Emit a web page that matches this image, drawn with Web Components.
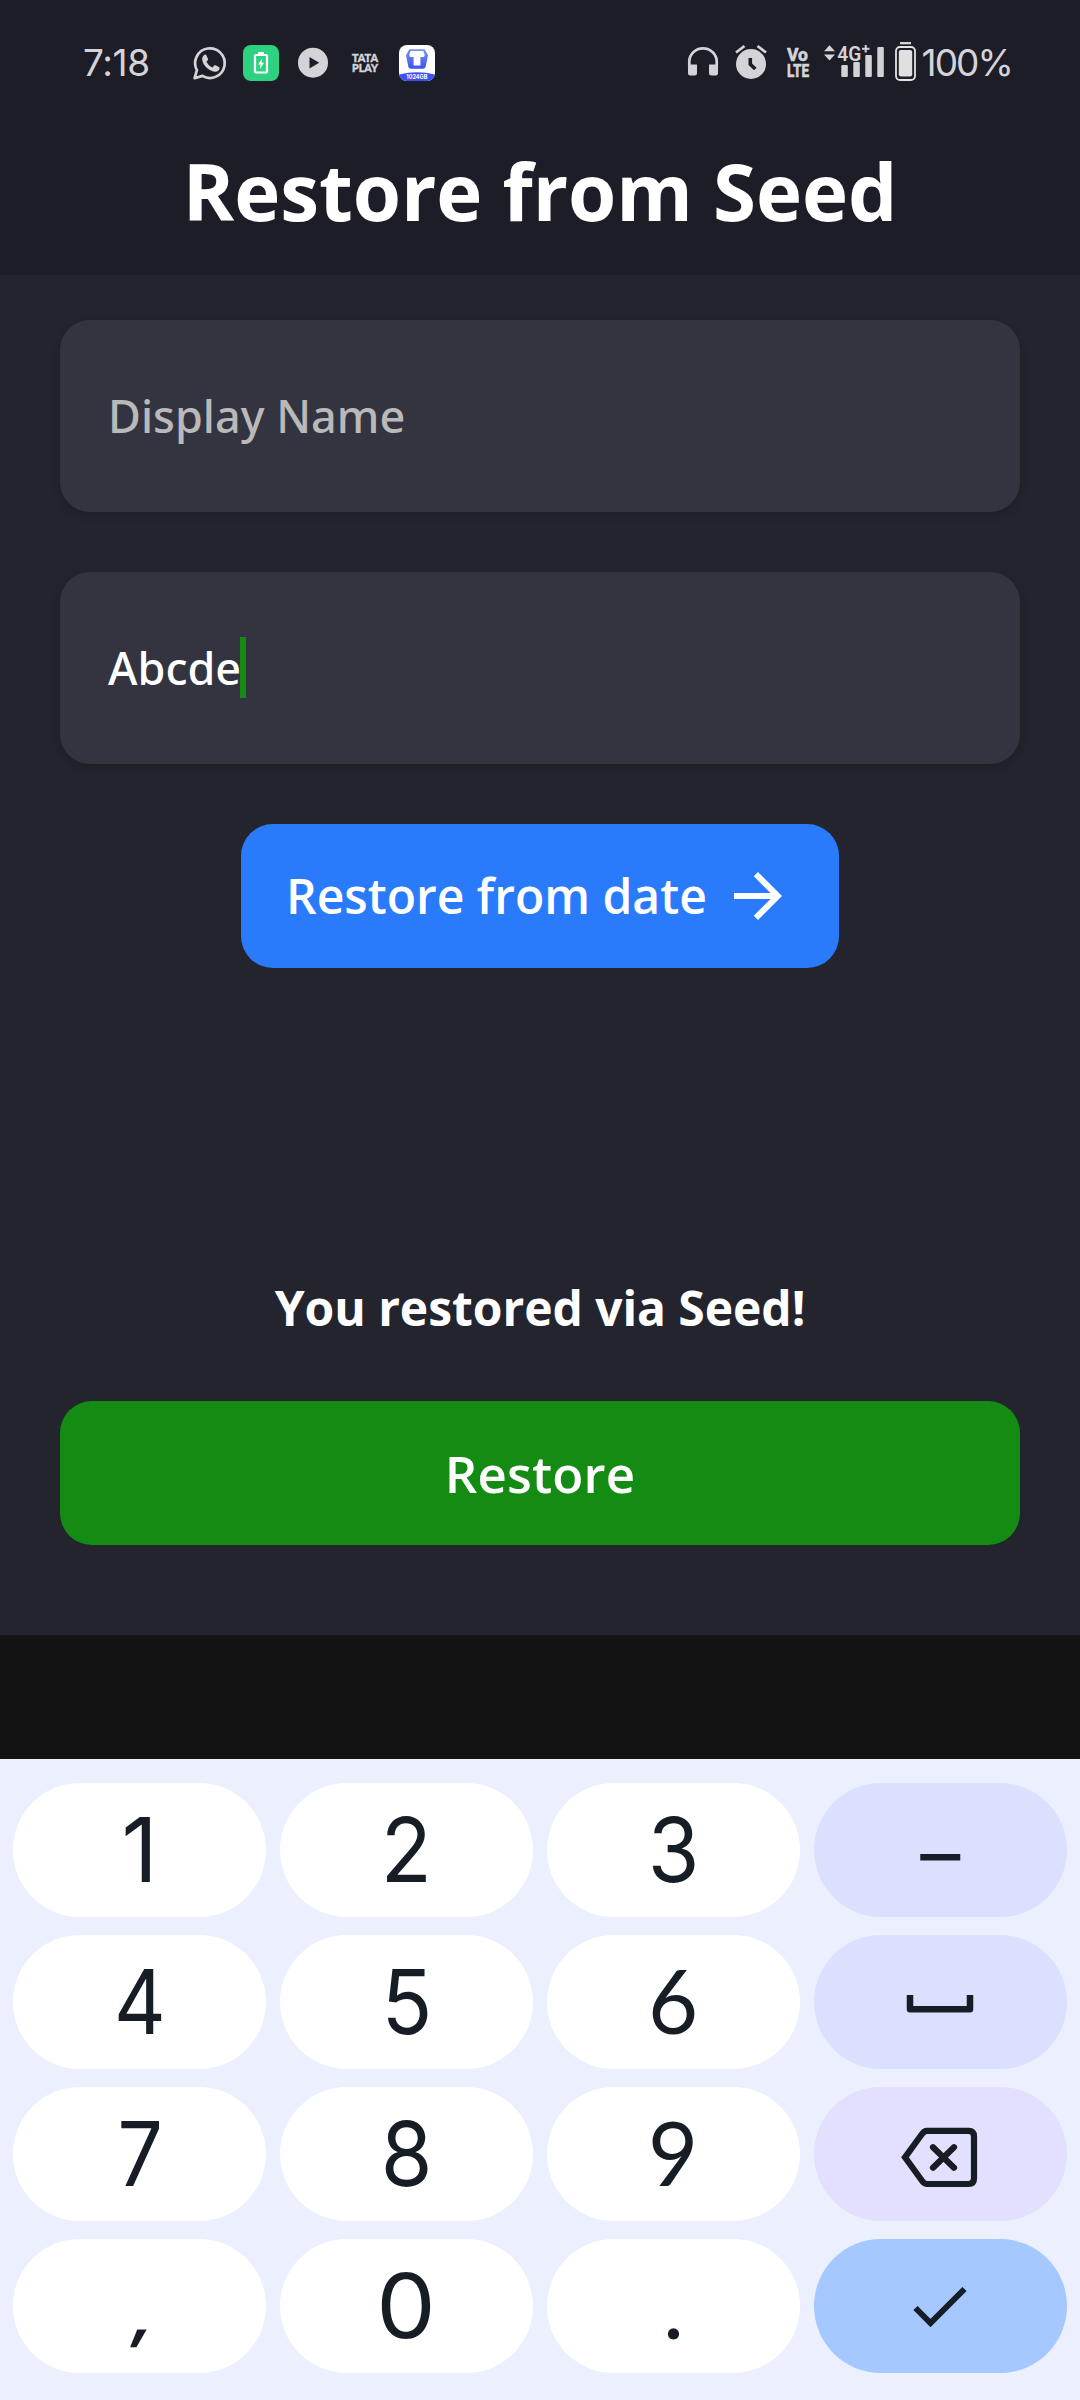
<!DOCTYPE html>
<html lang="en">
<head>
<meta charset="utf-8">
<title>Restore from Seed</title>
<style>
  html, body { margin: 0; padding: 0; }
  body { width: 1080px; height: 2400px; overflow: hidden; background: #131313; }
</style>
</head>
<body>
<restore-screen></restore-screen>

<script>
const define = (name, html) => {
  const tpl = document.createElement('template');
  tpl.innerHTML = html;
  customElements.define(name, class extends HTMLElement {
    constructor() {
      super();
      this.attachShadow({ mode: 'open' }).append(tpl.content.cloneNode(true));
    }
  });
};

define('status-bar', `
<style>
  :host { display: flex; align-items: flex-start; justify-content: space-between; height: 106px;
    padding: 38px 66px 0 83px; box-sizing: border-box; color: #d4d4d8; font: 400 37px/50px Inter, sans-serif; }
  .side { display: flex; align-items: center; height: 50px; }
  svg { display: block; flex: none; overflow: visible; }
  .time { width: 67px; letter-spacing: -.4px; white-space: nowrap; }
  .pct { letter-spacing: -1.900px; margin-left: 5.500px; white-space: nowrap; width: 92.500px; }
</style>
<div class="side">
  <span class="time">7:18</span>
  <svg style="margin-left:42px" width="35" height="50" viewBox="0 0 35 50" fill="none" stroke="#d4d4d8" stroke-width="2.7">
    <path d="M2.6 40.2 4.9 32.2A14.8 14.8 0 1 1 10.4 37.9Z" stroke-linejoin="round"/>
    <path fill="#d4d4d8" stroke="none" d="M11.8 17.2c.8-.8 2.1-.9 2.6.1l1.5 3.4c.3.7.1 1.2-.3 1.7l-1.1 1.3c1.3 2.7 3.3 4.5 6.1 5.7l1.5-1.8c.4-.5.9-.6 1.4-.3l3.4 1.7c.7.4.8.8.6 1.6-.5 2.3-2.5 3.4-4.6 3.2-6.4-.8-11.9-6.3-12.7-12-.2-1.8.5-3.5 1.600-4.600z"/>
  </svg>
  <svg style="margin-left:16px" width="36" height="50" viewBox="0 0 36 50">
    <rect x="0" y="7" width="36" height="36" rx="8" fill="#2dd280"/>
    <rect x="12" y="17" width="12" height="17.500" rx="1" fill="none" stroke="#fff" stroke-width="2.200"/>
    <rect x="15" y="14" width="6" height="3" fill="#fff"/>
    <path d="M19.400 20.500 15 26.500h2.600l-.9 4.800 4.500-6.500h-2.700z" fill="#fff"/>
  </svg>
  <svg style="margin-left:19px" width="30" height="50" viewBox="0 0 30 50">
    <circle cx="15" cy="24.700" r="15" fill="#d4d4d8"/><path d="M11.500 19v11.600l9.700-5.800z" fill="#1d1d27"/>
  </svg>
  <svg style="margin-left:24px" width="27" height="50" viewBox="0 0 27 50" fill="#d4d4d8" stroke="#d4d4d8" stroke-width=".4" font-family="Lato" font-weight="900" font-size="10.500">
    <text x="0" y="23.700" textLength="26" lengthAdjust="spacingAndGlyphs">TATA</text>
    <text x="0" y="33.500" textLength="26" lengthAdjust="spacingAndGlyphs">PLAY</text>
  </svg>
  <svg style="margin-left:20px" width="36" height="50" viewBox="0 0 36 50">
    <defs><clipPath id="tile"><rect y="7" width="36" height="36" rx="8"/></clipPath>
    <linearGradient id="tg" x2="0" y2="1"><stop stop-color="#7893f5"/><stop offset="1" stop-color="#3d52ee"/></linearGradient></defs>
    <g clip-path="url(#tile)"><rect y="7" width="36" height="36" fill="#fff"/>
      <path d="M0 36.500Q18 32 36 36.500V43H0z" fill="#3f51f5"/></g>
    <path d="M10.300 11.300h15.400l3.300 6-2.300 11.200q-.5 2.200-2.700 2.200H12q-2.200 0-2.700-2.200L7 17.300z" fill="url(#tg)"/>
    <path d="M11.700 13h12.600l1.500 4-.8 2h-3.600v8.400h-6.800V19H11l-.8-2z" fill="#fff"/>
    <text x="7.300" y="41.200" font-family="Inter" font-weight="700" font-size="6" fill="#fff" textLength="21" lengthAdjust="spacingAndGlyphs">1024GB</text>
  </svg>
</div>
<div class="side">
  <svg width="30" height="50" viewBox="0 0 30 50">
    <path d="M1.300 30V23.500a13.700 13.200 0 0 1 27.400 0V30" fill="none" stroke="#d4d4d8" stroke-width="2.700"/>
    <path d="M0 26.500h9V35q0 2.500-2.500 2.500h-4Q0 37.500 0 35zM30 26.500h-9V35q0 2.500 2.500 2.500h4Q30 37.500 30 35z" fill="#d4d4d8"/>
  </svg>
  <svg style="margin-left:17px" width="32" height="50" viewBox="0 0 32 50">
    <circle cx="16" cy="26" r="15" fill="#d4d4d8"/>
    <path d="M1 14.500 9.500 8M31 14.500 22.500 8" stroke="#d4d4d8" stroke-width="2.800"/>
    <path d="M15.300 20v6.200l5 4.800" fill="none" stroke="#1d1d27" stroke-width="3.600"/>
  </svg>
  <svg style="margin-left:20px" width="22" height="50" viewBox="0 0 22 50" fill="#d4d4d8" stroke="#d4d4d8" stroke-width=".5" font-family="Roboto" font-weight="800">
    <text x="0" y="22.500" font-size="18.500" textLength="21" lengthAdjust="spacingAndGlyphs">Vo</text>
    <text x="0" y="38.600" font-size="18.500" textLength="22" lengthAdjust="spacingAndGlyphs">LTE</text>
  </svg>
  <svg style="margin-left:15px" width="60" height="50" viewBox="0 0 60 50" fill="#d4d4d8">
    <path d="M0 13.200 5.500 7.200l5.500 6zM0 16.500h11l-5.500 6z"/>
    <text x="13.300" y="22.500" font-family="Roboto" font-weight="600" font-size="20.500" textLength="24" lengthAdjust="spacingAndGlyphs">4G</text>
    <path d="M38 10.800h7.500M41.700 7v7.500" stroke="#d4d4d8" stroke-width="2"/>
    <rect x="17.300" y="27" width="6.500" height="12" rx="1"/>
    <rect x="29.300" y="24" width="6.500" height="15" rx="1"/>
    <rect x="41.300" y="17" width="6.500" height="22" rx="1"/>
    <rect x="53.300" y="9" width="6.500" height="30" rx="1"/>
  </svg>
  <svg style="margin-left:11px" width="21" height="50" viewBox="0 0 21 50">
    <rect x="5" y="4" width="11" height="2.300" fill="#d4d4d8"/>
    <rect x="1" y="9" width="19" height="33" rx="4" fill="none" stroke="#e4e4e6" stroke-width="1.800"/>
    <rect x="3.800" y="12" width="13.400" height="26.500" rx="2" fill="#e0e0e2"/>
  </svg>
  <span class="pct">100%</span>
</div>`);

define('app-header', `
<style>
  :host { display: flex; align-items: center; justify-content: center; height: 169px; }
  h1 { margin: 0; color: #fff; font: 700 78px/106px "Open Sans", sans-serif; white-space: nowrap; letter-spacing: -.06px; }
</style><h1><slot></slot></h1>`);

define('text-field', `
<style>
  :host { display: flex; align-items: center; height: 192px; padding: 0 48px 2px; box-sizing: border-box;
    border-radius: 30px; background: #343440; color: #fff; box-shadow: 0 3px 8px rgba(0,0,0,.2);
    font: 500 45px/61px "Noto Sans", sans-serif; }
  :host([placeholder]) { color: #b9b9b9; }
  i { display: none; width: 6px; height: 61px; margin-left: -1px; background: #148c14; }
  :host([focused]) i { display: block; }
</style><slot></slot><i></i>`);

define('action-button', `
<style>
  :host { display: flex; align-items: center; justify-content: center; height: 144px; box-sizing: border-box;
    border-radius: 32px; background: #148c14; color: #fff; white-space: nowrap;
    font: 600 51px/70px "Open Sans", sans-serif; letter-spacing: .15px; }
  :host([date]) { width: 598px; align-self: center; background: #297bfc; font-size: 48px; letter-spacing: 0;
    justify-content: flex-start; padding-left: 45px; }
  svg { display: none; margin-left: 15px; }
  :host([date]) svg { display: block; }
</style><slot></slot>
<svg width="72" height="72" viewBox="0 0 24 24" fill="#fff"><path d="M12 4 10.590 5.410 16.170 11H4v2h12.170l-5.580 5.590L12 20l8-8z"/></svg>`);

define('status-message', `
<style>
  :host { display: block; text-align: center; color: #fff; font: 700 48px/66px "Open Sans", sans-serif; letter-spacing: -.06px; }
</style><slot></slot>`);

define('key-cap', `
<style>
  :host { display: flex; align-items: center; justify-content: center; height: 134px; border-radius: 67px;
    background: #fff; color: #171d25; font: 400 89px/134px Inter, sans-serif; }
  :host([tone="soft"]) { background: #dce0ff; }
  :host([tone="delete"]) { background: #e2dfff; }
  :host([tone="enter"]) { background: #a4c8ff; }
  ::slotted(svg) { display: block; overflow: visible; }
  ::slotted(span) { display: block; }
</style><slot></slot>`);

define('number-pad', `
<style>
  :host { display: grid; grid-template-columns: repeat(4, 1fr); grid-auto-rows: 134px; gap: 18px 13.500px;
    height: 641px; padding: 24px 13px 0; box-sizing: border-box; background: #ecf0fe; }
  .narrow { transform: scaleX(.94); }
  .slim { transform: scaleX(.9); }
  .wide { transform: scaleX(1.06); }
  .lato { font-family: Lato, sans-serif; font-size: 90px; transform: translateY(-3px) scaleX(.96); }
  .dash { font-size: 80px; transform: translateY(3px); }
  .comma { transform-origin: 50% 99px; transform: translateY(-2px) skewX(-10deg) scale(1.05,.72); }
  .dot { font-family: Lato, sans-serif; transform: translateY(-1px); }
</style>
<key-cap><span>1</span></key-cap><key-cap><span class="narrow">2</span></key-cap><key-cap><span class="narrow">3</span></key-cap>
<key-cap tone="soft"><span class="dash">–</span></key-cap>
<key-cap><span class="slim">4</span></key-cap><key-cap><span class="narrow">5</span></key-cap><key-cap><span class="lato">6</span></key-cap>
<key-cap tone="soft"><svg width="68" height="134" viewBox="0 0 68 134"><path d="M4 60v14.300h60V60" fill="none" stroke="#171d25" stroke-width="6.500" stroke-linejoin="round"/></svg></key-cap>
<key-cap><span class="slim">7</span></key-cap><key-cap><span class="narrow">8</span></key-cap><key-cap><span class="lato">9</span></key-cap>
<key-cap tone="delete"><svg width="78" height="134" viewBox="0 0 78 134" fill="none" stroke="#171d25" stroke-width="6.200"><path d="M4 70.300 21 47q2.300-3.200 5-3.200H67.500q5.500 0 5.500 5.500V91.500q0 5.500-5.500 5.500H26q-2.700 0-5-3.200z"/><path d="M32 60.200 53 80.700M53 60.200 32 80.700" stroke-linecap="round"/></svg></key-cap>
<key-cap><span class="comma">,</span></key-cap><key-cap><span class="wide">0</span></key-cap><key-cap><span class="dot">.</span></key-cap>
<key-cap tone="enter"><svg width="54" height="134" viewBox="0 0 54 134"><path d="M2.500 69 17.500 84 51.500 50" fill="none" stroke="#171d25" stroke-width="6"/></svg></key-cap>`);

define('restore-screen', `
<style>
  :host { display: flex; flex-direction: column; width: 1080px; height: 2400px; background: #131313; }
  header { display: block; background: #1d1d27; }
  main { display: flex; flex-direction: column; box-sizing: border-box; height: 1360px; padding: 45px 60px 90px; gap: 60px; background: #24242e; }
  .bottom { display: flex; flex-direction: column; gap: 60px; margin-top: auto; }
  number-pad { margin-top: auto; }
</style>
<header><status-bar></status-bar><app-header>Restore from Seed</app-header></header>
<main>
  <text-field placeholder>Display Name</text-field>
  <text-field focused>Abcde</text-field>
  <action-button date>Restore from date</action-button>
  <div class="bottom">
    <status-message>You restored via Seed!</status-message>
    <action-button>Restore</action-button>
  </div>
</main>
<number-pad></number-pad>`);
</script>
</body>
</html>
